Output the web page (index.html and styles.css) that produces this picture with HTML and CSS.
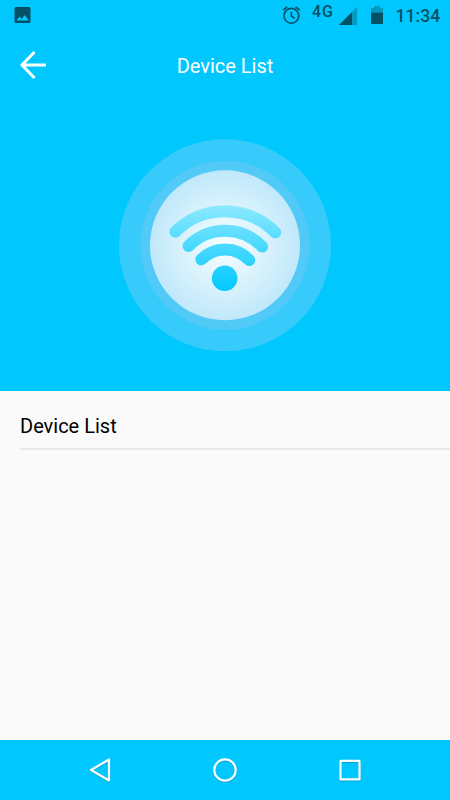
FILE: index.html
```
<!DOCTYPE html>
<html lang="en">
<head>
    <meta charset="UTF-8">
    <meta name="viewport" content="width=device-width, initial-scale=1.0">
    <title>Device List</title>
    <link rel="stylesheet" href="styles.css">
</head>
<body>
    <div class="screen">
        <div class="status-bar">
            <svg class="icon-picture" width="17" height="16" viewBox="0 0 17 16">
                <path fill-rule="evenodd" d="M2 0h13a1.500 1.500 0 0 1 1.500 1.500v13a1.500 1.500 0 0 1-1.500 1.500h-13a1.500 1.500 0 0 1-1.500-1.500v-13a1.500 1.500 0 0 1 1.500-1.500zM2.500 13.600h12.300L10.800 8 7.700 12 5.500 9.500z"/>
            </svg>
            <svg class="icon-alarm" width="18" height="19" viewBox="0 0 18 19">
                <circle cx="9.400" cy="10.800" r="7.400"/>
                <path d="M9.400 6.500v4.600l3.200 2.200M1 5.200L5.200 1.800M17.800 5.200L13.600 1.800"/>
            </svg>
            <span class="network">4G</span>
            <svg class="icon-signal" width="18" height="18" viewBox="0 0 18 18">
                <path class="faded" d="M18 0v18H0z"/>
                <path d="M13 5v13H0z"/>
            </svg>
            <svg class="icon-battery" width="12" height="18" viewBox="0 0 12 18">
                <path class="faded" d="M3 0h6v2h3v4.500H0V2h3z"/>
                <path d="M0 6.500h12V17a1 1 0 0 1-1 1H1a1 1 0 0 1-1-1z"/>
            </svg>
            <span class="clock">11:34</span>
        </div>

        <div class="title-bar">
            <svg class="back" width="28" height="30" viewBox="0 0 28 30">
                <path d="M28 15H4M16.500 2L4 15l12.500 13"/>
            </svg>
            <h1>Device List</h1>
        </div>

        <div class="hero">
            <svg width="214" height="214" viewBox="118 138 214 214">
                <defs>
                    <radialGradient id="disc">
                        <stop offset="0" stop-color="#f8fdff"/>
                        <stop offset="0.5" stop-color="#dcf3fc"/>
                        <stop offset="1" stop-color="#c0e8fb"/>
                    </radialGradient>
                    <linearGradient id="wave" gradientUnits="userSpaceOnUse" x1="0" y1="205" x2="0" y2="291">
                        <stop offset="0" stop-color="#8ee9ff"/>
                        <stop offset="1" stop-color="#00c8ff"/>
                    </linearGradient>
                </defs>
                <circle cx="225" cy="245.300" r="106" fill="#36cbfa"/>
                <circle cx="225" cy="245.300" r="84.500" fill="#52caf7"/>
                <circle cx="225" cy="245.300" r="75" fill="url(#disc)"/>
                <g fill="none" stroke="url(#wave)" stroke-width="12" stroke-linecap="round">
                    <path d="M175.300 231.700A70.500 70.500 0 0 1 275.200 232.400"/>
                    <path d="M188.500 246A51.400 51.400 0 0 1 262.200 246.600"/>
                    <path d="M201.300 259.400A33.100 33.100 0 0 1 249.200 260"/>
                </g>
                <circle cx="224.700" cy="278.300" r="12.800" fill="url(#wave)"/>
            </svg>
        </div>

        <div class="device-list">
            <h2>Device List</h2>
        </div>

        <div class="nav-bar">
            <svg width="24" height="26" viewBox="0 0 24 26">
                <path d="M21 2.500v21L3 13z"/>
            </svg>
            <svg width="26" height="26" viewBox="0 0 26 26">
                <circle cx="13" cy="13" r="10.700"/>
            </svg>
            <svg width="24" height="26" viewBox="0 0 24 26">
                <rect x="2.500" y="3.800" width="19" height="18.600" rx="0.5"/>
            </svg>
        </div>
    </div>
</body>
</html>
```

FILE: styles.css
```
body {
    margin: 0;
    font-family: Roboto, sans-serif;
    background: #fafafa;
}

.screen {
    display: flex;
    flex-direction: column;
    height: 800px;
    width: 450px;
    overflow: hidden;
}

.screen svg {
    display: block;
    flex-shrink: 0;
}

.status-bar {
    display: flex;
    height: 32px;
    background: #00c8ff;
    color: #045064;
    fill: #045064;
}

.icon-picture {
    margin: 7px 0 0 14px;
}

.icon-alarm {
    margin: 5px 0 0 251px;
    fill: none;
    stroke: #045064;
    stroke-width: 1.6;
}

.network {
    width: 27px;
    margin: 2px 0 0 12px;
    font-size: 16px;
    font-weight: 500;
    line-height: 19px;
    letter-spacing: 0.9px;
}

.icon-signal {
    margin: 7px 0 0 0;
}

.icon-battery {
    margin: 6px 0 0 14px;
}

.faded {
    fill: #0599bf;
}

.clock {
    margin: 5px 0 0 12.5px;
    font-size: 17.600px;
    font-weight: 500;
    line-height: 22px;
}

.title-bar {
    display: grid;
    grid-template-columns: 50px 1fr 50px;
    align-items: center;
    height: 67px;
    background: #00c8ff;
}

.back {
    margin: 0 0 2px 18px;
    fill: none;
    stroke: #fff;
    stroke-width: 3;
}

h1, h2 {
    margin: 0;
    font-size: 20px;
    font-weight: 400;
    line-height: 24px;
}

h1 {
    color: #fff;
    text-align: center;
}

.hero {
    display: flex;
    justify-content: center;
    height: 253px;
    padding-top: 39px;
    background: #00c8ff;
}

.device-list {
    flex: 1;
}

h2 {
    height: 34px;
    margin-left: 20px;
    padding-top: 23px;
    border-bottom: 2px solid #e8e8e8;
    color: #000;
}

.nav-bar {
    display: flex;
    justify-content: space-between;
    align-items: center;
    height: 60px;
    padding: 0 88px;
    background: #00c8ff;
}

.nav-bar svg {
    fill: none;
    stroke: #fff;
    stroke-width: 2.2;
    stroke-linejoin: round;
    filter: drop-shadow(0 1px 0.5px rgba(0, 60, 80, 0.25));
}
```
